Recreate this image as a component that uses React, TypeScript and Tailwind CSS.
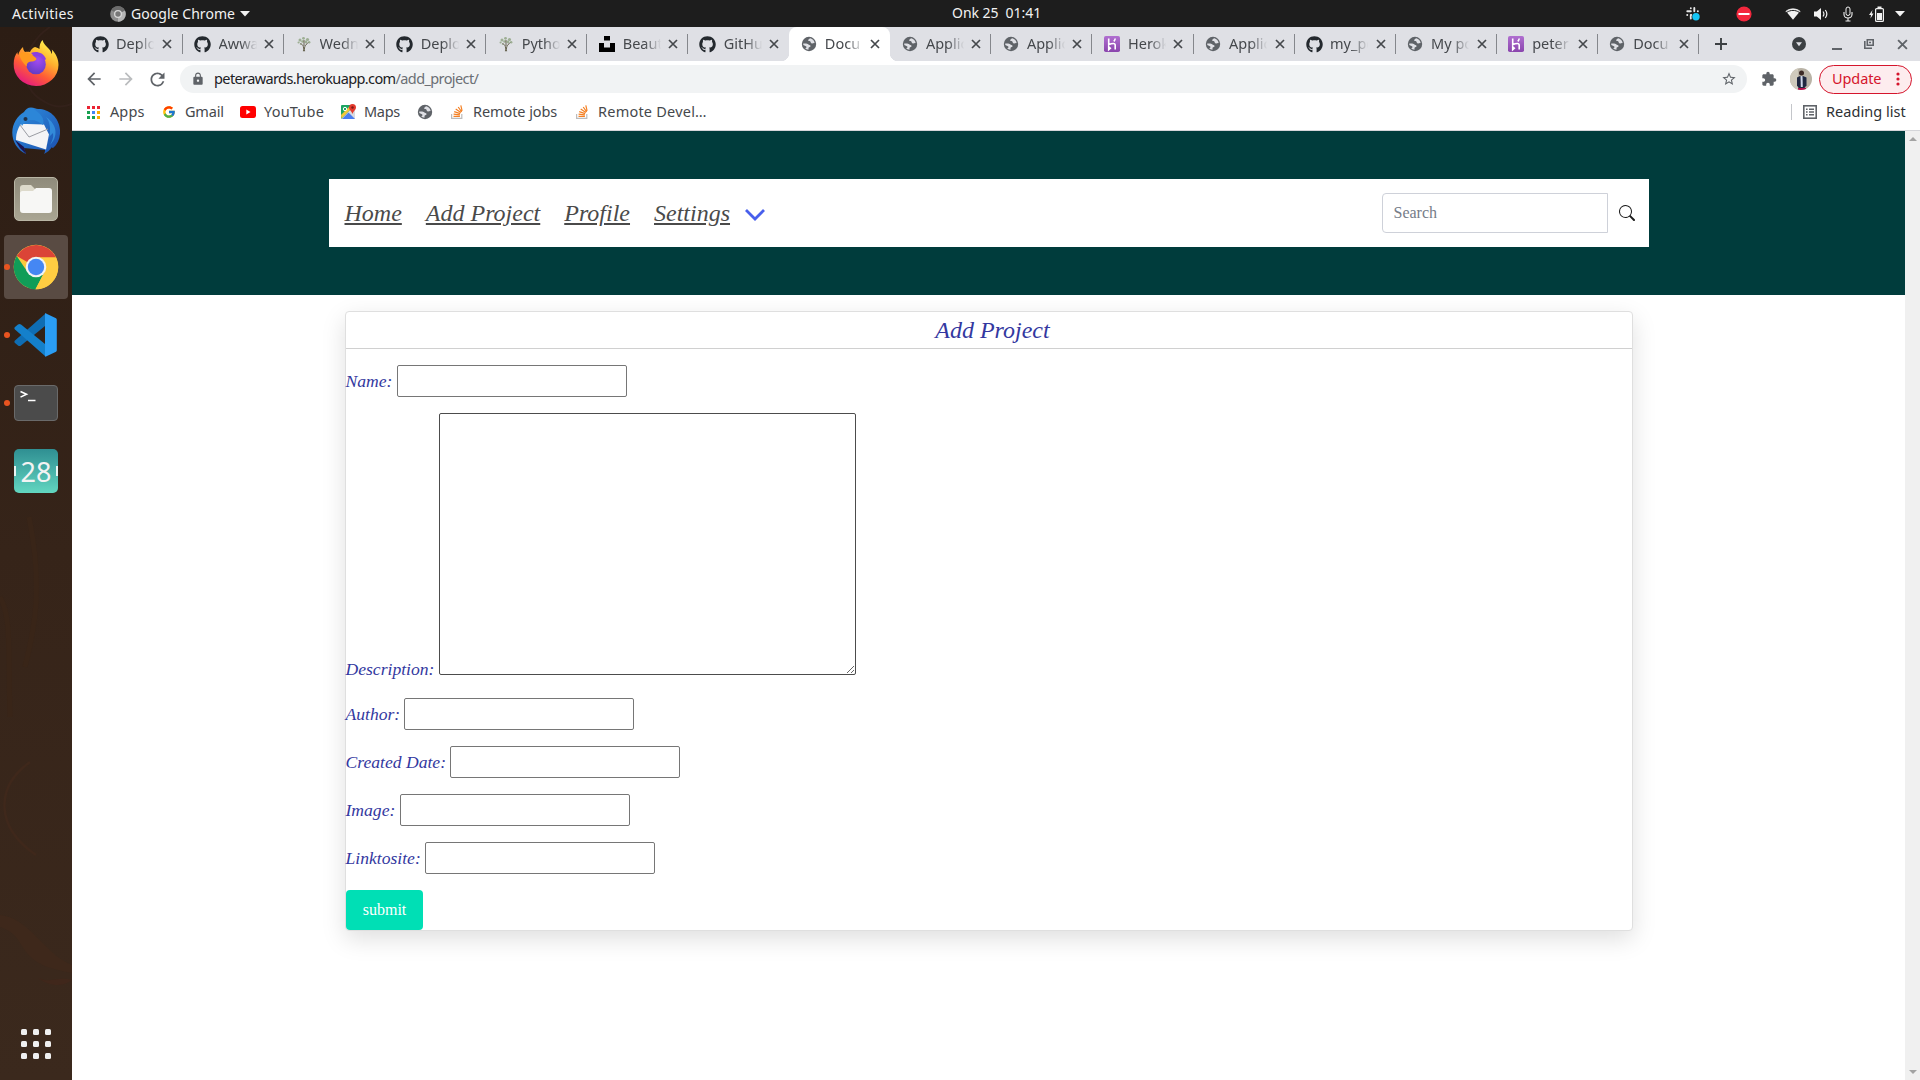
import React from "react";
import { FaGithub } from "react-icons/fa";
import { FcGoogle } from "react-icons/fc";
import { BsSearch } from "react-icons/bs";
import {
  MdArrowBack,
  MdArrowForward,
  MdExtension,
  MdLock,
  MdRefresh,
  MdStarBorder,
} from "react-icons/md";

/* ---------- small icons ---------- */

function Globe() {
  return (
    <svg viewBox="0 0 16 16" className="size-4">
      <circle cx="8" cy="8" r="7.2" fill="#5f6368" />
      <path
        d="M2.200 7.600c1.800-.3 4.400-.2 5 .7.500.8 1.900.5 2.300 1.500.3.800-.5 1.400-1.300 1.500-.8.200-.7.900-.7 2.500-1.500-.1-2.300-.5-3.200-1.200l1.300-1.300c.1-1.100-2.100-1.400-3.300-2.200z"
        fill="#dfe0e5"
      />
      <path
        d="M9.300 2.300c-1.400.7-2.500 1.600-2 2.500.4.700 1.800.2 2.200 1 .4.900.5 1.600 1.500 1.700.9.100 1.300-.6 2.700-.3-.3-2.500-2-4.400-4.400-4.900z"
        fill="#dfe0e5"
      />
    </svg>
  );
}

function Heroku() {
  return (
    <svg viewBox="0 0 16 16" className="size-4">
      <defs>
        <linearGradient id="hk" x1="0" y1="0" x2="0" y2="1">
          <stop offset="0" stopColor="#b06fd0" />
          <stop offset="1" stopColor="#8a45ad" />
        </linearGradient>
      </defs>
      <rect width="16" height="16" rx="1.800" fill="url(#hk)" />
      <path
        d="M4.700 2.500v6.300c1.500-.8 3.200-1.300 4.800-1.300 1.400 0 1.700.7 1.700 1.700v4.300M4.700 10.800v2.900l1.600-1.450zM11.200 2.500c-.1 1.100-.6 2-1.400 2.900"
        stroke="#fff"
        strokeWidth="1.600"
        fill="none"
      />
    </svg>
  );
}

function Unsplash() {
  return (
    <svg viewBox="0 0 16 16" className="size-4">
      <path d="M5 0h6v4.500H5zM0 7h5v4.500h6V7h5v9H0z" fill="#000" />
    </svg>
  );
}

function Tree() {
  return (
    <svg viewBox="0 0 16 16" className="size-4">
      <g fill="#9dae93">
        <circle cx="4" cy="4" r="1.500" />
        <circle cx="7.500" cy="2.300" r="1.400" />
        <circle cx="11.500" cy="3.500" r="1.600" />
        <circle cx="2.600" cy="6.500" r="1.100" />
        <circle cx="6.500" cy="5.500" r="1.300" />
        <circle cx="10" cy="6" r="1.400" />
        <circle cx="13.200" cy="6.300" r="1.200" />
        <circle cx="4.600" cy="8.300" r=".8" />
      </g>
      <path
        d="M7.400 15.300c.4-2.300.2-4.300-.3-5.500L4.500 7M8.600 15.300c-.4-2.700 0-4.300.6-5.500L12 6.500M8 10V4"
        stroke="#5a5640"
        strokeWidth="0.900"
        fill="none"
      />
    </svg>
  );
}

function StackOverflow() {
  return (
    <svg viewBox="0 0 12 14" className="h-[14px] w-3" fill="none">
      <path d="M.6 9v4.400h10.200V9" stroke="#bcbbbb" strokeWidth="1.200" />
      <path
        d="M2.500 11.400h6.400M2.600 9.100l6.300.7M3.200 6.600l6 2M4.700 4l5.200 3.500M7.200 2l3.500 4.800M9.800.4l1.300 5.500"
        stroke="#f48024"
        strokeWidth="1.200"
      />
    </svg>
  );
}

function CloseX({ size, sw, color }: { size: number; sw: number; color: string }) {
  return (
    <svg viewBox="0 0 10 10" width={size} height={size} className="shrink-0">
      <path d="M1 1l8 8M9 1L1 9" stroke={color} strokeWidth={sw} />
    </svg>
  );
}

const favicons: Record<string, React.ReactNode> = {
  gh: <FaGithub className="size-[17px] text-[#24292e]" />,
  globe: <Globe />,
  heroku: <Heroku />,
  tree: <Tree />,
  unsplash: <Unsplash />,
};

const tabs: { icon: string; title: string; active?: boolean }[] = [
  { icon: "gh", title: "Deplo" },
  { icon: "gh", title: "Awwa" },
  { icon: "tree", title: "Wedn" },
  { icon: "gh", title: "Deplo" },
  { icon: "tree", title: "Pytho" },
  { icon: "unsplash", title: "Beaut" },
  { icon: "gh", title: "GitHu" },
  { icon: "globe", title: "Docu", active: true },
  { icon: "globe", title: "Applic" },
  { icon: "globe", title: "Applic" },
  { icon: "heroku", title: "Herok" },
  { icon: "globe", title: "Applic" },
  { icon: "gh", title: "my_po" },
  { icon: "globe", title: "My po" },
  { icon: "heroku", title: "peter" },
  { icon: "globe", title: "Docu" },
];

/* ---------- top bar ---------- */

function TopBar() {
  return (
    <header className="relative flex h-[27px] shrink-0 items-center bg-[#1d1d1d] text-[14px] text-[#f2f2f2]">
      <span className="ml-3 w-[98px] tracking-[0.350px]">Activities</span>
      <svg viewBox="0 0 16 16" className="size-4">
        <circle cx="8" cy="8" r="7.800" fill="#8d8d8d" />
        <path d="M8 8L1.200 4.200A7.800 7.800 0 0 1 15 4.800z" fill="#6c6c6c" />
        <path d="M8 8l7-3.200A7.800 7.800 0 0 1 8 15.800z" fill="#b5b5b5" />
        <circle cx="8" cy="8" r="4" fill="#d8d8d8" />
        <circle cx="8" cy="8" r="2.700" fill="#777" />
      </svg>
      <span className="ml-[5px] w-[109px] whitespace-nowrap tracking-[0.050px]">Google Chrome</span>
      <svg viewBox="0 0 10 6" className="h-[6px] w-[10px]">
        <path d="M0 0h10L5 5.500z" fill="#f2f2f2" />
      </svg>
      <span className="absolute left-[952px] top-[2px] whitespace-pre tracking-[-0.050px]">Onk 25  01:41</span>
      <div className="ml-auto flex items-center pr-[15px]">
        <svg viewBox="0 0 16 16" className="mr-[35px] size-4">
          <g stroke="#e8e8e8" strokeWidth="1.900" strokeLinecap="round">
            <path d="M5.800 2.200v.1M5.800 5.300H2.300M9.300 2v3.300M12.800 5.300h.1M2.200 9h.1M5.800 9v3.500M5.800 9h.5M9.300 9h3.500" />
          </g>
          <circle cx="11" cy="10.800" r="4.300" fill="#1d1d1d" />
          <circle cx="11" cy="10.800" r="3.700" fill="#15c5f5" />
        </svg>
        <svg viewBox="0 0 16 16" className="mr-[33px] size-4">
          <circle cx="8" cy="8" r="7.600" fill="#f3273d" />
          <rect x="2.500" y="7" width="11" height="2" fill="#fff" />
        </svg>
        <svg viewBox="0 0 16 14" className="mr-[12px] h-[14px] w-4">
          <path d="M1 4.200C5 .9 11 .9 15 4.200L8 12.800z" fill="#f2f2f2" />
          <path d="M.6 4.600C4.600 1 11.400 1 15.400 4.600" stroke="#f2f2f2" strokeWidth="0.800" fill="none" />
          <path d="M1.900 5.300c3.600-2.500 8.600-2.500 12.200 0" stroke="#1d1d1d" strokeWidth="1" fill="none" />
        </svg>
        <svg viewBox="0 0 16 14" className="mr-[14px] h-[14px] w-4">
          <path d="M1 4.500h2.800L8 1v12L3.800 9.500H1z" fill="#f2f2f2" />
          <path d="M10 4.500c1.200 1.600 1.200 3.400 0 5M12.300 3c2 2.600 2 5.400 0 8" stroke="#f2f2f2" strokeWidth="1.200" fill="none" />
        </svg>
        <svg viewBox="0 0 10 16" className="mr-[16px] h-4 w-[10px]">
          <rect x="3" y="1" width="4" height="8.500" rx="2" fill="none" stroke="#f2f2f2" strokeWidth="1" />
          <path d="M1 6v2.500a4 3.500 0 0 0 8 0V6M5 12v3M2.500 15h5" stroke="#f2f2f2" strokeWidth="1.100" fill="none" />
        </svg>
        <svg viewBox="0 0 15 16" className="mr-[11px] h-4 w-[15px]">
          <path d="M3.500 4L0 9h2l-.5 3.500L4.500 7.500H2.700z" fill="#f2f2f2" />
          <rect x="6.600" y="2.600" width="7.800" height="12.800" rx="1" fill="none" stroke="#f2f2f2" strokeWidth="1.200" />
          <path d="M8.500.500h4v2h-4zM8 7h5v7H8z" fill="#f2f2f2" />
        </svg>
        <svg viewBox="0 0 10 6" className="h-[6px] w-[10px]">
          <path d="M0 0h10L5 5.500z" fill="#f2f2f2" />
        </svg>
      </div>
    </header>
  );
}

/* ---------- dock ---------- */

function FirefoxIcon() {
  return (
    <svg viewBox="0 0 48 48" className="size-12">
      <defs>
        <linearGradient id="ff1" x1=".8" y1="0.050" x2=".25" y2="1">
          <stop offset="0" stopColor="#fff44f" />
          <stop offset=".35" stopColor="#ffb02e" />
          <stop offset=".65" stopColor="#ff5b36" />
          <stop offset="1" stopColor="#e31587" />
        </linearGradient>
        <radialGradient id="ff2" cx=".6" cy=".3" r=".8">
          <stop offset="0" stopColor="#a24bf0" />
          <stop offset="1" stopColor="#5b3ac0" />
        </radialGradient>
      </defs>
      <path
        d="M30.500 1c1 4 4 6 6.500 9 1.500 1.500 2 3 2.500 5 .8-1.500.8-3 .3-4.500 4 4 6.700 9.500 6.700 15.500A22.500 21 0 0 1 24 47 22.500 21 0 0 1 1.700 25c0-5 1.300-9 3.800-12 0 1.500.2 2 .7 3C7 13 8.500 10 11 8c.2 2.500.8 3.700 2 5 1.500-.3 3.300-.3 5 0C19 10.500 20.500 9 23 8c2 1 3.500 1 4.500 2-.2-3.500 1-7 3-9z"
        fill="url(#ff1)"
      />
      <circle cx="24" cy="25.500" r="9.800" fill="url(#ff2)" />
      <path d="M7 14c4-1.500 10-1 17 5 1.500 1.500-1 3.500-5 3.500-3 .5-4.500 2-4.300 5C11 24 8 20 7 14z" fill="#ff9a1f" />
      <path d="M19 14c5-2 12-1 15 6l-2 2c-2-4-6-6-10-5z" fill="#8b3fe0" />
    </svg>
  );
}

function ThunderbirdIcon() {
  return (
    <svg viewBox="0 0 48 48" className="size-12">
      <defs>
        <linearGradient id="tb" x1="0" y1="0" x2="1" y2="1">
          <stop offset="0" stopColor="#2f8fe0" />
          <stop offset="1" stopColor="#1b4fae" />
        </linearGradient>
      </defs>
      <path
        d="M19 .500c3 0 5 1.500 7 1.500 11 0 21 8 22 21 .5 8-2 14-7 18 0 0-1 0-1-1-2 3-4.500 5-8 7 1-2 1-3 1-4L12 41l2 6C5 43 0 34 .300 25 .600 17 5 9 12 5c1.500-2.500 4-4.500 7-4.500z"
        fill="url(#tb)"
      />
      <path d="M3 33l5 8 6 6-2-7z" fill="#1d1450" />
      <path d="M15 17l17 .5 5 10-3 15L4 33c0-7 2-12 5-16z" fill="#f4f4f6" />
      <path d="M8 18l9 12 19-8" stroke="#9a9ca3" strokeWidth="1" fill="none" />
      <path d="M20 1c-5 0-9 5-11 10-1 4 0 6 1 8 2-4 5-6 9-6 5 0 8 2 12 5 2-6-2-12-11-17z" fill="#2c86d8" />
      <circle cx="13.500" cy="12" r="2" fill="#22324a" />
      <path d="M34 10c4 5 5 12 3 20l4-4c1 4-1 8-3 12 8-8 8-20-4-28z" fill="#3a9be6" opacity=".7" />
    </svg>
  );
}

function ChromeIcon() {
  return (
    <svg viewBox="0 0 46 46" className="size-[46px]">
      <circle cx="23" cy="23" r="22.300" fill="#fbc93d" />
      <path d="M23 23L3.700 12A22.300 22.300 0 0 1 43 13.500H23z" fill="#db4437" />
      <path d="M3.700 12A22.300 22.300 0 0 0 22.500 45.300L31.500 28 23 23 14.500 28z" fill="#109d58" />
      <path d="M23 13.500h20a22.300 22.300 0 0 1-20.500 31.800L31.500 28z" fill="#ffcd42" />
      <circle cx="23" cy="23" r="10.300" fill="#f3f3f3" />
      <circle cx="23" cy="23" r="8.200" fill="#4587f3" />
    </svg>
  );
}

function VsCodeIcon() {
  return (
    <svg viewBox="0 0 44 44" className="size-11">
      <path d="M1 27.500L31 1v12L7 32.500c-1 .7-2 .7-3 0L1 30c-.8-.8-.8-1.700 0-2.500z" fill="#0f6db3" />
      <path d="M1 16.500L31 43V31L7 11.500c-1-.7-2-.7-3 0L1 14c-.8.800-.8 1.700 0 2.500z" fill="#1480cb" />
      <path d="M31 .500c.6-.3 1 0 1.500.2l9 4.300c.8.400 1.300 1 1.300 2v30c0 1-.5 1.600-1.300 2l-9 4.300c-.5.200-.9.500-1.500.2z" fill="#2a9df4" />
    </svg>
  );
}

function DockSlot({ children, dot, active }: { children: React.ReactNode; dot?: boolean; active?: boolean }) {
  return (
    <div className={`relative mx-1 mb-1 flex h-16 items-center justify-center rounded ${active ? "bg-[#594b43]" : ""}`}>
      {dot && <span className="absolute left-0 top-[29px] size-[6px] rounded-full bg-[#e95420]" />}
      {children}
    </div>
  );
}

function Dock() {
  return (
    <aside className="relative flex w-[72px] shrink-0 flex-col bg-linear-to-b from-[#2c1d14] via-[#362419] to-[#3b291d] pt-1">
      <svg viewBox="0 0 72 1053" className="absolute inset-0 h-full w-full" fill="none">
        <path d="M50 0C20 20 15 60 45 75c10 6 20 5 27 2" stroke="#33211a" strokeWidth="2" />
        <path d="M30 735C-5 760-5 800 36 828" stroke="#3f281b" strokeWidth="2.500" />
        <path d="M0 888c30 3 45 40 72 50v8c-30-6-40-10-52-30-5-10-14-14-20-16z" fill="#3e281b" />
        <path d="M38 951c12 6 20-2 34 2-8 6-20 8-34-2z" fill="#40271b" />
        <path d="M25 640c10-40 18-80 4-150M0 570c12 20 8 60 10 120" stroke="#392518" strokeWidth="5" />
      </svg>
      <DockSlot><FirefoxIcon /></DockSlot>
      <DockSlot><ThunderbirdIcon /></DockSlot>
      <DockSlot>
        <div className="flex size-11 items-center justify-center rounded-[5px] border border-[#b9b6a5] bg-linear-to-b from-[#8f8b7b] to-[#a9a592]">
          <svg viewBox="0 0 32 28" className="h-7 w-8">
            <path d="M0 3a3 3 0 0 1 3-3h8l4 4v6H0z" fill="#dddacb" />
            <path d="M0 8.500C0 7 1 6 2.500 6H13l3-3h13a3 3 0 0 1 3 3v19a3 3 0 0 1-3 3H3a3 3 0 0 1-3-3z" fill="#f7f7f5" />
          </svg>
        </div>
      </DockSlot>
      <DockSlot dot active><ChromeIcon /></DockSlot>
      <DockSlot dot><VsCodeIcon /></DockSlot>
      <DockSlot dot>
        <div className="flex h-9 w-11 items-start rounded-[4px] border border-[#6a6a6a] bg-[#4b4b4b] pl-[5px] pt-[4px]">
          <svg viewBox="0 0 16 12" className="h-3 w-4">
            <path d="M.5 1.500l6 2.800-6 2.800M8 10.500h7.500" stroke="#fff" strokeWidth="1.600" fill="none" />
          </svg>
        </div>
      </DockSlot>
      <DockSlot>
        <div className="flex size-11 items-center justify-between rounded-[5px] bg-linear-to-b from-[#2f8f92] to-[#62d6c0]">
          <span className="h-[10px] w-[2px] bg-[#e8f5f3]" />
          <span className="font-['Noto_Sans'] text-[27px] leading-none text-[#f3f3f3]">28</span>
          <span className="h-[10px] w-[2px] bg-[#e8f5f3]" />
        </div>
      </DockSlot>
      <div className="relative mb-[21px] ml-[21px] mt-auto grid w-[30px] grid-cols-3 gap-[6px]">
        {Array.from({ length: 9 }, (_, i) => (
          <span key={i} className="size-[6px] rounded-[1.500px] bg-[#f0f0f0]" />
        ))}
      </div>
    </aside>
  );
}

/* ---------- browser chrome ---------- */

function TabStrip() {
  return (
    <div className="flex h-[34px] shrink-0 items-center bg-[#dfe0e5] pl-[10px] text-[14.500px] text-[#45484c]">
      {tabs.map((t, i) => (
        <div
          key={i}
          className={`relative flex h-[34px] w-[101.060px] shrink-0 items-center ${i === 0 ? "pl-[9.500px]" : "pl-[11px]"} ${t.active ? "rounded-t-lg bg-white" : ""}`}
        >
          {t.active && (
            <>
              <span className="absolute -left-2 bottom-0 size-2 bg-[radial-gradient(circle_at_0_0,transparent_8px,white_8.500px)]" />
              <span className="absolute -right-2 bottom-0 size-2 bg-[radial-gradient(circle_at_100%_0,transparent_8px,white_8.500px)]" />
            </>
          )}
          <span className="flex w-[17px] shrink-0 justify-center">{favicons[t.icon]}</span>
          <span className="ml-[7.500px] w-[39px] overflow-hidden whitespace-nowrap [mask-image:linear-gradient(to_right,black_55%,transparent_98%)]">
            {t.title}
          </span>
          <span className="ml-[6.500px] flex"><CloseX size={10} sw={1.7} color="#45484c" /></span>
          {!t.active && i !== 6 && <span className="absolute right-0 top-[7px] h-5 w-px bg-[#85878c]" />}
        </div>
      ))}
      <svg viewBox="0 0 12 12" className="ml-[16px] size-3">
        <path d="M6 0v12M0 6h12" stroke="#3c4043" strokeWidth="1.900" />
      </svg>
      <div className="ml-auto flex items-center pr-[12px]">
        <svg viewBox="0 0 14 14" className="mr-[26px] size-[14px]">
          <circle cx="7" cy="7" r="7" fill="#3c4043" />
          <path d="M4 5.300h6L7 9.300z" fill="#dfe0e5" />
        </svg>
        <span className="mr-[22px] mt-[9px] h-[2px] w-[10px] bg-[#5f6368]" />
        <svg viewBox="0 0 10 10" className="mr-[23px] size-[10px]" fill="none" stroke="#5f6368" strokeWidth="1.600">
          <path d="M3.300.8h5.900v5.400H3.300zM.8 2v7.200H8M5 3.500h2" />
        </svg>
        <CloseX size={11} sw={1.7} color="#5f6368" />
      </div>
    </div>
  );
}

function Toolbar() {
  return (
    <div className="flex h-[36px] shrink-0 items-center bg-white text-[#5f6368]">
      <MdArrowBack className="ml-[12px] size-5" />
      <MdArrowForward className="ml-[12px] size-5 text-[#babcbe]" />
      <MdRefresh className="ml-[11px] size-[21px]" />
      <div className="ml-[12px] flex h-7 w-[1567px] items-center rounded-full bg-[#f1f3f4] pl-[11px] pr-[10px]">
        <MdLock className="size-[14px]" />
        <span className="ml-[9px] whitespace-nowrap text-[14.500px] tracking-[-0.610px] text-[#202124]">
          peterawards.herokuapp.com<span className="text-[#6b6f74]">/add_project/</span>
        </span>
        <MdStarBorder className="ml-auto size-4" />
      </div>
      <MdExtension className="ml-[14px] size-4" />
      <svg viewBox="0 0 22 22" className="ml-[13px] size-[22px] rounded-full">
        <rect width="22" height="22" fill="#b9b3a6" />
        <path d="M0 0h8v22H0z" fill="#cfcabd" />
        <circle cx="11.500" cy="5" r="2.500" fill="#3c2a26" />
        <path d="M7 9.500l3-1.500h3l3.500 1.500v8l-2.500 3H9l-2-3z" fill="#1f2740" />
        <path d="M10.500 8h2l.3 11h-2z" fill="#cfd8ea" />
        <path d="M8 20h8v2H8z" fill="#b5104a" />
      </svg>
      <div className="ml-[7px] flex h-[29px] w-[93px] items-center rounded-full border border-[#d5152c] bg-[#fdecee] pl-[12px] text-[14.500px] text-[#d5152c]">
        <span className="w-[50px] tracking-[-0.100px]">Update</span>
        <svg viewBox="0 0 4 14" className="ml-[14px] h-[14px] w-1" fill="#d5152c">
          <circle cx="2" cy="2" r="1.600" />
          <circle cx="2" cy="7" r="1.600" />
          <circle cx="2" cy="12" r="1.600" />
        </svg>
      </div>
    </div>
  );
}

function Bookmarks() {
  return (
    <div className="flex h-[34px] shrink-0 items-center whitespace-nowrap border-b border-[#d5d6da] bg-white pb-[3px] text-[14.500px] text-[#45484c]">
      <svg viewBox="0 0 13 13" className="ml-[15px] size-[13px]">
        <path d="M0 0h3v3H0zM5 0h3v3H5zM10 0h3v3h-3z" fill="#ea2433" />
        <path d="M0 5h3v3H0zM0 10h3v3H0zM5 10h3v3H5z" fill="#18a050" />
        <path d="M5 5h3v3H5z" fill="#4285f4" />
        <path d="M10 5h3v3h-3zM10 10h3v3h-3z" fill="#f9ab00" />
      </svg>
      <span className="ml-[10px] w-[52px] tracking-[0.100px]">Apps</span>
      <FcGoogle className="size-[14px]" />
      <span className="ml-[9px] w-[55px] tracking-[-0.200px]">Gmail</span>
      <svg viewBox="0 0 16 12" className="h-3 w-4">
        <rect width="16" height="12" rx="2.500" fill="#f00" />
        <path d="M6.300 3.500v5L10.500 6z" fill="#fff" />
      </svg>
      <span className="ml-[8px] w-[77px] tracking-[0.200px]">YouTube</span>
      <svg viewBox="0 0 16 16" className="size-4">
        <rect x="0" y="1" width="14" height="14" rx="1" fill="#1da462" />
        <path d="M0 15L14 1v14z" fill="#d8dbe0" />
        <path d="M1 15l6.500-6.500L14 15z" fill="#4a7df0" />
        <path d="M0 11l8-8 2 2-9.500 9.500z" fill="#f5c73a" />
        <circle cx="4" cy="5" r="1.700" fill="none" stroke="#fff" strokeWidth="1" />
        <path d="M11.500 0a3.500 3.500 0 0 1 3.500 3.500c0 2.500-2.600 3.500-3.500 6.500-.9-3-3.500-4-3.500-6.500A3.500 3.500 0 0 1 11.500 0z" fill="#e33b2e" />
        <circle cx="11.500" cy="3.500" r="1.200" fill="#7d1a14" />
      </svg>
      <span className="ml-[7px] w-[53px] tracking-[-0.300px]">Maps</span>
      <Globe />
      <span className="ml-[18px] flex"><StackOverflow /></span>
      <span className="ml-[10px] w-[103px] tracking-[-0.080px]">Remote jobs</span>
      <StackOverflow />
      <span className="ml-[10px] tracking-[0.220px]">Remote Devel…</span>
      <div className="ml-auto flex items-center pr-[14px] text-[#2d3033]">
        <span className="h-4 w-px bg-[#c4c6ca]" />
        <svg viewBox="0 0 14 14" className="ml-[11px] size-[14px]" stroke="#5f6368" fill="none">
          <rect x=".8" y=".8" width="12.400" height="12.400" strokeWidth="1.600" />
          <path d="M3 4.200h1.600M3 7h1.600M3 9.800h1.600M6 4.200h5M6 7h5M6 9.800h5" strokeWidth="1.400" />
        </svg>
        <span className="ml-[9px] w-[80px] tracking-[0.050px]">Reading list</span>
      </div>
    </div>
  );
}

/* ---------- web page ---------- */

const links = ["Home", "Add Project", "Profile", "Settings"];

function Field({ label }: { label: string }) {
  return (
    <p className="mb-4 flex h-8 items-center">
      <label className="-ml-[0.500px] mr-[4.200px]">{label}</label>
      <input className="h-8 w-[230px] rounded-[2px] border border-[#767676] bg-white" />
    </p>
  );
}

function Page() {
  return (
    <div className="flex min-h-0 flex-1">
      <main className="flex-1 overflow-hidden bg-white font-['Liberation_Serif',serif]">
        <div className="flex h-[164px] items-center justify-center bg-[#003c3c]">
          <nav className="flex h-[68px] w-[1320px] items-center gap-6 bg-white pl-4 pr-[13px]">
            {links.map((l) => (
              <a key={l} className="text-2xl italic leading-9 text-[#4a4a4a] underline">
                {l}
              </a>
            ))}
            <svg viewBox="0 0 20 12" className="-ml-[9px] mt-1 h-3 w-5">
              <path d="M1 1l9 9 9-9" stroke="#485fec" strokeWidth="2.800" fill="none" />
            </svg>
            <div className="ml-auto flex items-center">
              <input
                placeholder="Search"
                className="h-10 w-[226px] rounded-l border border-[#ced1d9] bg-white px-[11px] text-base placeholder:text-[#757c88]"
              />
              <BsSearch className="ml-[11px] mr-px size-4 text-[#1d1d1d]" />
            </div>
          </nav>
        </div>
        <div className="ml-[273px] mt-4 h-[620px] w-[1288px] rounded border border-[#dfdfdf] bg-white text-[17.600px] italic text-[#3338a0] shadow-[0_8px_24px_rgba(0,0,0,0.13)]">
          <h2 className="h-[37px] border-b border-[#d0d0d0] pl-[7px] text-center text-2xl leading-9">Add Project</h2>
          <form className="pt-4">
            <Field label="Name:" />
            <p className="mb-[23px] flex h-[262px] items-end">
              <label className="-ml-[0.500px] mr-[4.400px] translate-y-1 leading-[20px]">Description:</label>
              <textarea className="h-[262px] w-[417px] resize rounded-[2px] border border-[#4c4c4c] bg-white" />
            </p>
            <Field label="Author:" />
            <Field label="Created Date:" />
            <Field label="Image:" />
            <Field label="Linktosite:" />
            <button type="button" className="block h-10 w-[77px] rounded bg-[#00dfb5] text-base not-italic text-white">
              submit
            </button>
          </form>
        </div>
      </main>
      <div className="flex w-[15px] flex-col items-center justify-between bg-[#f0f0f0] py-[6px]">
        <svg viewBox="0 0 8 4" className="h-1 w-2"><path d="M0 4h8L4 0z" fill="#a3a3a3" /></svg>
        <svg viewBox="0 0 8 4" className="h-1 w-2"><path d="M0 0h8L4 4z" fill="#a3a3a3" /></svg>
      </div>
    </div>
  );
}

export default function App() {
  return (
    <div className="flex h-screen w-screen flex-col overflow-hidden font-['Noto_Sans',sans-serif]">
      <TopBar />
      <div className="flex min-h-0 flex-1">
        <Dock />
        <div className="flex min-w-0 flex-1 flex-col">
          <TabStrip />
          <Toolbar />
          <Bookmarks />
          <Page />
        </div>
      </div>
    </div>
  );
}
